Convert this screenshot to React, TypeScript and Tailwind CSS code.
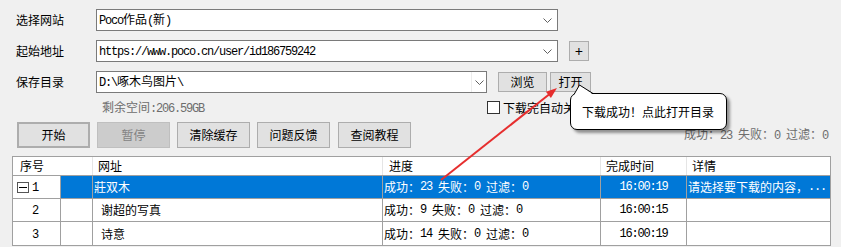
import React from "react";

// SimSun-like mixed text: CJK at 12px, ascii runs squeezed to 6px per char
function Sim({ text }: { text: string }) {
  const parts = text.split(/([\x20-\x7e]+)/).filter((p) => p !== "");
  return (
    <>
      {parts.map((p, i) =>
        /^[\x20-\x7e]+$/.test(p) ? (
          <span
            key={i}
            className="whitespace-pre font-['Liberation_Mono',monospace] tracking-[-1.2px]"
          >
            {p}
          </span>
        ) : (
          <span key={i}>{p}</span>
        ),
      )}
    </>
  );
}

function Chevron() {
  return (
    <svg width="9" height="5" viewBox="0 0 9 5" className="shrink-0">
      <polyline
        points="0.5,0.5 4.5,4.5 8.5,0.5"
        fill="none"
        stroke="#606060"
        strokeWidth="1"
      />
    </svg>
  );
}

function Combo({
  text,
  width,
  editable,
}: {
  text: string;
  width: string;
  editable?: boolean;
}) {
  return (
    <div
      className={`flex h-[22px] items-center border border-[#7a7a7a] bg-white ${width}`}
    >
      <div className="flex-1 truncate pl-[2px]">
        <Sim text={text} />
      </div>
      {editable ? (
        <div className="flex h-full w-[15px] items-center justify-center border-l border-[#ececec]">
          <Chevron />
        </div>
      ) : (
        <div className="mr-[5px] flex items-center">
          <Chevron />
        </div>
      )}
    </div>
  );
}

function Btn({
  children,
  className,
}: {
  children: React.ReactNode;
  className?: string;
}) {
  return (
    <div
      className={`flex items-center justify-center border border-[#adadad] bg-[#e1e1e1] ${className ?? ""}`}
    >
      {children}
    </div>
  );
}

const rows = [
  { no: "1", name: "莊双木", progress: "成功：23 失败：0 过滤：0", time: "16:00:19", detail: "请选择要下载的内容，...", selected: true },
  { no: "2", name: "谢超的写真", progress: "成功：9 失败：0 过滤：0", time: "16:00:15", detail: "", selected: false },
  { no: "3", name: "诗意", progress: "成功：14 失败：0 过滤：0", time: "16:00:19", detail: "", selected: false },
];

export default function App() {
  return (
    <div className="relative h-[247px] w-[841px] overflow-hidden bg-[#f0f0f0] pt-[9px] font-['Noto_Sans_CJK_SC',sans-serif] text-[12px] leading-[16px] text-black">
      {/* 选择网站 */}
      <div className="flex h-[22px] items-center">
        <div className="w-[96px] pl-[16px]">选择网站</div>
        <Combo text="Poco作品(新)" width="w-[462px]" />
      </div>

      {/* 起始地址 */}
      <div className="mt-[9px] flex h-[22px] items-center">
        <div className="w-[96px] pl-[16px]">起始地址</div>
        <Combo text="https://www.poco.cn/user/id186759242" width="w-[462px]" />
        <Btn className="ml-[11px] h-[20px] w-[20px] text-[14px]">+</Btn>
      </div>

      {/* 保存目录 */}
      <div className="mt-[9px] flex h-[22px] items-center">
        <div className="w-[96px] pl-[16px]">保存目录</div>
        <Combo text="D:\啄木鸟图片\" width="w-[391px]" editable />
        <Btn className="ml-[11px] h-[20px] w-[49px]">浏览</Btn>
        <Btn className="ml-[3px] h-[20px] w-[41px]">打开</Btn>
      </div>

      {/* 剩余空间 + 复选框 */}
      <div className="mt-[7px] flex h-[15px] items-center">
        <div className="w-[487px] pl-[102px] text-[#6d6d6d]">
          <Sim text="剩余空间:206.59GB" />
        </div>
        <div className="h-[13px] w-[13px] border border-[#333333] bg-white" />
        <div className="ml-[3px] whitespace-nowrap">下载完自动关闭</div>
      </div>

      {/* 按钮 */}
      <div className="mt-[7px] flex h-[26px] items-start pl-[17px]">
        <div className="flex h-[26px] gap-[7px]">
          <Btn className="w-[73px] border-2 border-[#0078d7]">开始</Btn>
          <div className="flex w-[73px] items-center justify-center border border-[#bfbfbf] bg-[#cccccc] text-[#838383]">
            暂停
          </div>
          <Btn className="w-[73px]">清除缓存</Btn>
          <Btn className="w-[73px]">问题反馈</Btn>
          <Btn className="ml-[1px] w-[73px]">查阅教程</Btn>
        </div>
        <div className="ml-auto mr-[13px] mt-[4px] whitespace-nowrap text-[#6d6d6d]">
          <Sim text="成功：23 失败：0 过滤：0" />
        </div>
      </div>

      {/* 表格 */}
      <div className="ml-[12px] mt-[8px] w-[819px] border border-[#a0a0a0] bg-white">
        <div className="flex h-[19px] border-b border-[#a0a0a0]">
          <div className="w-[80px] border-r border-[#e5e5e5] pl-[7px] leading-[18px]">序号</div>
          <div className="w-[290px] border-r border-[#e5e5e5] pl-[5px] leading-[18px]">网址</div>
          <div className="w-[218px] border-r border-[#e5e5e5] pl-[6px] leading-[18px]">进度</div>
          <div className="w-[86px] border-r border-[#e5e5e5] pl-[5px] leading-[18px]">完成时间</div>
          <div className="flex-1 pl-[5px] leading-[18px]">详情</div>
        </div>
        {rows.map((r, i) => {
          const sel = r.selected ? "bg-[#0078d7] text-white" : "";
          return (
            <div
              key={r.no}
              className={`flex h-[23px] ${i < rows.length - 1 ? "border-b" : ""} border-[#a0a0a0]`}
            >
              <div className="flex w-[48px] items-center border-r border-[#a0a0a0]">
                {r.selected ? (
                  <>
                    <div className="ml-[4px] flex h-[11px] w-[12px] items-center justify-center border border-[#555555]">
                      <div className="h-px w-[8px] bg-black" />
                    </div>
                    <div className="ml-[3px]">
                      <Sim text={r.no} />
                    </div>
                  </>
                ) : (
                  <div className="pl-[19px]">
                    <Sim text={r.no} />
                  </div>
                )}
              </div>
              <div className={`w-[32px] border-r border-[#a0a0a0] ${sel}`} />
              <div
                className={`flex w-[290px] items-center border-r border-[#a0a0a0] ${r.selected ? "pl-[1px]" : "pl-[8px]"} ${sel}`}
              >
                {r.name}
              </div>
              <div className={`flex w-[218px] items-center whitespace-nowrap border-r border-[#a0a0a0] pl-[1px] ${sel}`}>
                <Sim text={r.progress} />
              </div>
              <div className={`flex w-[86px] items-center justify-center border-r border-[#a0a0a0] ${sel}`}>
                <Sim text={r.time} />
              </div>
              <div className={`flex flex-1 items-center whitespace-nowrap pl-[1px] ${sel}`}>
                <Sim text={r.detail} />
              </div>
            </div>
          );
        })}
      </div>

      {/* 提示气泡 */}
      <div className="absolute left-[570px] top-[93px] flex h-[37px] w-[157px] items-center rounded-[7px] border border-black bg-white pl-[11px] shadow-[3px_3px_3px_rgba(0,0,0,0.4)]">
        下载成功！点此打开目录
      </div>
      <svg
        className="pointer-events-none absolute left-[570px] top-[83px]"
        width="30"
        height="13"
        viewBox="0 0 30 13"
      >
        <polygon points="4,12 9.5,2 23,11.5 23,13 4,13" fill="white" />
        <polyline
          points="4,11.5 9.5,2 23,10.5"
          fill="none"
          stroke="black"
          strokeWidth="1"
        />
      </svg>

      {/* 红色箭头 */}
      <svg
        className="pointer-events-none absolute left-0 top-0"
        width="841"
        height="247"
        viewBox="0 0 841 247"
      >
        <line x1="441" y1="180" x2="549" y2="94.5" stroke="#e62e2e" strokeWidth="2" />
        <polygon points="557,88 550.9,97.9 545.9,91.7" fill="#e62e2e" />
      </svg>
    </div>
  );
}
